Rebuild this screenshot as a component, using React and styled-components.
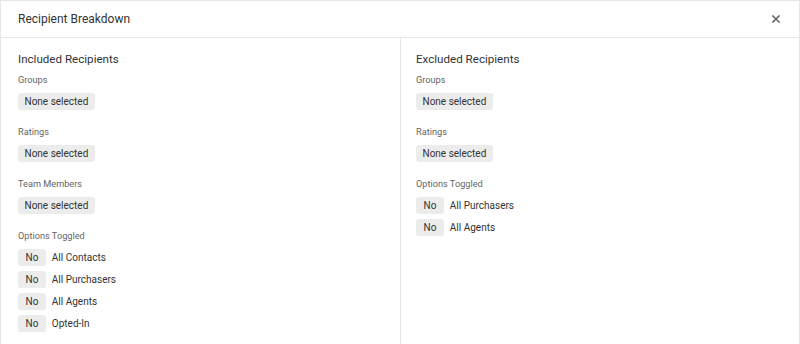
import React from "react";
import styled, { createGlobalStyle } from "styled-components";

const GlobalStyle = createGlobalStyle`
  html, body {
    margin: 0;
    padding: 0;
    background: #fff;
  }
  body {
    font-family: Roboto, "Liberation Sans", sans-serif;
    color: #333;
  }
`;

const Modal = styled.div`
  width: 800px;
  height: 344px;
  box-sizing: border-box;
  border: 1px solid #e6e6e6;
  border-bottom: none;
  display: flex;
  flex-direction: column;
  overflow: hidden;
`;

const Header = styled.div`
  height: 36px;
  flex: none;
  display: flex;
  align-items: center;
  justify-content: space-between;
  padding: 0 17px;
  border-bottom: 1px solid #e6e6e6;
`;

const Title = styled.div`
  font-size: 12px;
  color: #333;
`;

const Close = styled.button`
  border: none;
  background: none;
  padding: 0;
  width: 10px;
  height: 10px;
  display: flex;
  align-items: center;
  justify-content: center;
  color: #666;
  cursor: pointer;
  margin-right: 1px;
`;

const Columns = styled.div`
  flex: 1;
  display: grid;
  grid-template-columns: 399px 1fr;
`;

const Column = styled.div`
  padding: 13px ${(p) => (p.$right ? 15 : 17)}px 0;
  border-left: ${(p) => (p.$right ? "1px solid #e6e6e6" : "none")};
`;

const Heading = styled.div`
  font-size: 11.6px;
  line-height: 16px;
  color: #333;
  margin-bottom: 6px;
`;

const Section = styled.div`
  display: flex;
  flex-direction: column;
  align-items: flex-start;
  margin-bottom: ${(p) => p.$gap}px;
`;

const Label = styled.div`
  font-size: 9.2px;
  line-height: 13px;
  color: #666;
  margin-bottom: ${(p) => p.$gap ?? 7}px;
`;

const Chip = styled.span`
  display: inline-block;
  background: #ececec;
  border-radius: 3px;
  font-size: 10px;
  line-height: 17px;
  padding: 0 ${(p) => (p.$tight ? 7.5 : 6.5)}px;
  color: #333;
  text-align: center;
`;

const OptionList = styled.div`
  display: flex;
  flex-direction: column;
  gap: 5px;
`;

const Option = styled.div`
  display: flex;
  align-items: center;
  gap: 6px;
  font-size: 10px;
  line-height: 17px;
  color: #333;
`;

const Options = ({ items }) => (
  <Section $gap={0}>
    <Label $gap={7}>Options Toggled</Label>
    <OptionList>
      {items.map((item) => (
        <Option key={item}>
          <Chip $tight>No</Chip>
          {item}
        </Option>
      ))}
    </OptionList>
  </Section>
);

const Field = ({ label }) => (
  <Section $gap={15}>
    <Label>{label}</Label>
    <Chip>None selected</Chip>
  </Section>
);

export default function App() {
  return (
    <>
      <GlobalStyle />
      <Modal>
        <Header>
          <Title>Recipient Breakdown</Title>
          <Close aria-label="Close">
            <svg width="8" height="8" viewBox="0 0 8 8">
              <path
                d="M1 1L7 7M7 1L1 7"
                stroke="currentColor"
                strokeWidth="1.6"
                strokeLinecap="square"
              />
            </svg>
          </Close>
        </Header>
        <Columns>
          <Column>
            <Heading>Included Recipients</Heading>
            <Field label="Groups" />
            <Field label="Ratings" />
            <Field label="Team Members" />
            <Options
              items={["All Contacts", "All Purchasers", "All Agents", "Opted-In"]}
            />
          </Column>
          <Column $right>
            <Heading>Excluded Recipients</Heading>
            <Field label="Groups" />
            <Field label="Ratings" />
            <Options items={["All Purchasers", "All Agents"]} />
          </Column>
        </Columns>
      </Modal>
    </>
  );
}
